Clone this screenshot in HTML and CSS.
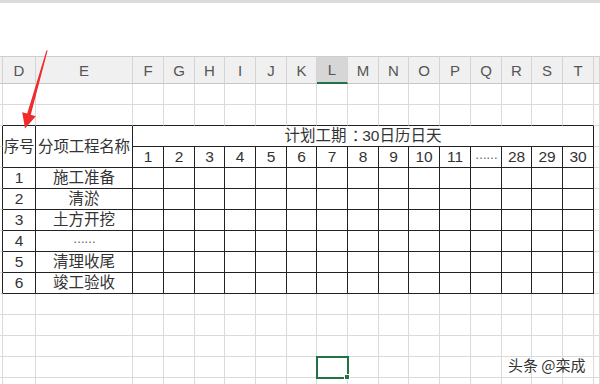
FILE: index.html
```html
<!DOCTYPE html>
<html lang="zh">
  <head>
    <meta charset="UTF-8" />
    <meta name="viewport" content="width=device-width, initial-scale=1.0" />
    <title>施工进度计划表</title>
    <link rel="stylesheet" href="styles.css">
  </head>
  <body>
    <div class="topbar"></div>
    <div class="blank"></div>

    <table class="sheet">
      <colgroup>
        <col class="w3"><col class="w33"><col class="w97">
        <col class="w31"><col class="w31"><col class="w30"><col class="w31"><col class="w31">
        <col class="w30"><col class="w31"><col class="w31"><col class="w30"><col class="w31">
        <col class="w31"><col class="w31"><col class="w30"><col class="w31"><col class="w31">
        <col class="w6">
      </colgroup>
      <thead>
        <tr class="heads">
          <th></th><th>D</th><th>E</th><th>F</th><th>G</th><th>H</th><th>I</th><th>J</th><th>K</th>
          <th class="cur">L</th><th>M</th><th>N</th><th>O</th><th>P</th><th>Q</th><th>R</th><th>S</th><th>T</th><th></th>
        </tr>
      </thead>
      <tbody>
        <tr>
          <td></td><td></td><td></td><td></td><td></td><td></td><td></td><td></td><td></td><td></td>
          <td></td><td></td><td></td><td></td><td></td><td></td><td></td><td></td><td></td>
        </tr>
        <tr>
          <td></td><td class="above"></td><td class="above"></td><td class="above"></td><td class="above"></td>
          <td class="above"></td><td class="above"></td><td class="above"></td><td class="above"></td>
          <td class="above"></td><td class="above"></td><td class="above"></td><td class="above"></td>
          <td class="above"></td><td class="above"></td><td class="above"></td><td class="above"></td>
          <td class="above"></td><td></td>
        </tr>
        <tr>
          <td class="left"></td>
          <td class="b title" rowspan="2">序号</td>
          <td class="b title" rowspan="2">分项工程名称</td>
          <td class="b plan" colspan="15">计划工期<span class="colon">：</span>30日历日天</td>
          <td></td>
        </tr>
        <tr>
          <td class="left"></td>
          <td class="b">1</td><td class="b">2</td><td class="b">3</td><td class="b">4</td><td class="b">5</td>
          <td class="b">6</td><td class="b">7</td><td class="b">8</td><td class="b">9</td><td class="b">10</td>
          <td class="b">11</td><td class="b"><span class="dots">……</span></td><td class="b">28</td><td class="b">29</td><td class="b">30</td>
          <td></td>
        </tr>
        <tr>
          <td class="left"></td><td class="b">1</td><td class="b">施工准备</td>
          <td class="b"></td><td class="b"></td><td class="b"></td><td class="b"></td><td class="b"></td>
          <td class="b"></td><td class="b"></td><td class="b"></td><td class="b"></td><td class="b"></td>
          <td class="b"></td><td class="b"></td><td class="b"></td><td class="b"></td><td class="b"></td>
          <td></td>
        </tr>
        <tr>
          <td class="left"></td><td class="b">2</td><td class="b">清淤</td>
          <td class="b"></td><td class="b"></td><td class="b"></td><td class="b"></td><td class="b"></td>
          <td class="b"></td><td class="b"></td><td class="b"></td><td class="b"></td><td class="b"></td>
          <td class="b"></td><td class="b"></td><td class="b"></td><td class="b"></td><td class="b"></td>
          <td></td>
        </tr>
        <tr>
          <td class="left"></td><td class="b">3</td><td class="b">土方开挖</td>
          <td class="b"></td><td class="b"></td><td class="b"></td><td class="b"></td><td class="b"></td>
          <td class="b"></td><td class="b"></td><td class="b"></td><td class="b"></td><td class="b"></td>
          <td class="b"></td><td class="b"></td><td class="b"></td><td class="b"></td><td class="b"></td>
          <td></td>
        </tr>
        <tr>
          <td class="left"></td><td class="b">4</td><td class="b"><span class="dots">……</span></td>
          <td class="b"></td><td class="b"></td><td class="b"></td><td class="b"></td><td class="b"></td>
          <td class="b"></td><td class="b"></td><td class="b"></td><td class="b"></td><td class="b"></td>
          <td class="b"></td><td class="b"></td><td class="b"></td><td class="b"></td><td class="b"></td>
          <td></td>
        </tr>
        <tr>
          <td class="left"></td><td class="b">5</td><td class="b">清理收尾</td>
          <td class="b"></td><td class="b"></td><td class="b"></td><td class="b"></td><td class="b"></td>
          <td class="b"></td><td class="b"></td><td class="b"></td><td class="b"></td><td class="b"></td>
          <td class="b"></td><td class="b"></td><td class="b"></td><td class="b"></td><td class="b"></td>
          <td></td>
        </tr>
        <tr>
          <td class="left"></td><td class="b">6</td><td class="b">竣工验收</td>
          <td class="b"></td><td class="b"></td><td class="b"></td><td class="b"></td><td class="b"></td>
          <td class="b"></td><td class="b"></td><td class="b"></td><td class="b"></td><td class="b"></td>
          <td class="b"></td><td class="b"></td><td class="b"></td><td class="b"></td><td class="b"></td>
          <td></td>
        </tr>
        <tr>
          <td></td><td></td><td></td><td></td><td></td><td></td><td></td><td></td><td></td><td></td>
          <td></td><td></td><td></td><td></td><td></td><td></td><td></td><td></td><td></td>
        </tr>
        <tr>
          <td></td><td></td><td></td><td></td><td></td><td></td><td></td><td></td><td></td><td></td>
          <td></td><td></td><td></td><td></td><td></td><td></td><td></td><td></td><td></td>
        </tr>
        <tr>
          <td></td><td></td><td></td><td></td><td></td><td></td><td></td><td></td><td></td><td></td>
          <td></td><td></td><td></td><td></td><td></td><td></td><td></td><td></td><td></td>
        </tr>
        <tr>
          <td></td><td></td><td></td><td></td><td></td><td></td><td></td><td></td><td></td><td class="selected"></td>
          <td></td><td></td><td></td><td></td><td></td><td></td><td></td><td></td><td></td>
        </tr>
        <tr>
          <td></td><td></td><td></td><td></td><td></td><td></td><td></td><td></td><td></td><td></td>
          <td></td><td></td><td></td><td></td><td></td><td></td><td></td><td></td><td></td>
        </tr>
      </tbody>
    </table>

    <!-- red pointer drawn on top of the sheet -->
    <svg class="arrow" width="60" height="140" viewBox="0 0 60 140">
      <polygon points="47.6,50.6 46.4,50.4 27.2,113.6 22.2,112.2 25,128.5 35.8,116.2 30.8,114.8" fill="#ef2b2b" />
    </svg>

    <div class="watermark">头条 @栾成</div>
  </body>
</html>
```

FILE: styles.css
```css
body {
  margin: 0;
  width: 600px;
  height: 384px;
  overflow: hidden;
  position: relative;
  background: #fff;
  font-family: "Liberation Sans", "Noto Sans CJK SC", sans-serif;
}
.topbar {
  height: 3px;
  background: #dcdcdc;
}
.blank {
  height: 53px;
}
.sheet {
  table-layout: fixed;
  width: 600px;
  border-collapse: separate;
  border-spacing: 0;
}
.w3 { width: 3px; }
.w6 { width: 6px; }
.w30 { width: 30px; }
.w31 { width: 31px; }
.w33 { width: 33px; }
.w97 { width: 97px; }

.sheet th,
.sheet td {
  box-sizing: border-box;
  padding: 0;
  white-space: nowrap;
  text-align: center;
}
.heads th {
  height: 28px;
  background: #f0f0f0;
  border-top: 1px solid #cdcdcd;
  border-right: 1px solid #d4d4d4;
  border-bottom: 1px solid #c6c6c6;
  font-weight: normal;
  font-size: 15px;
  color: #555;
}
.heads th.cur {
  background: #d6d6d6;
  border-bottom: 2px solid #217346;
}
.sheet tbody tr {
  height: 21px;
}
.sheet td {
  height: 21px;
  border-right: 1px solid #dadada;
  border-bottom: 1px solid #dadada;
  font-size: 15.5px;
  line-height: 18px;
  color: #333;
}
.sheet td.above {
  border-bottom-color: #222;
}
.sheet td.left {
  border-right-color: #222;
}
.sheet td.b {
  border-right-color: #222;
  border-bottom-color: #222;
}
.sheet td.title {
  letter-spacing: -0.2px;
}
.colon {
  padding-left: 5px;
  letter-spacing: -5px;
}
.dots {
  position: relative;
  top: -3px;
  font-size: 12px;
  letter-spacing: -1px;
  color: #555;
}
.sheet td.selected {
  position: relative;
  outline: 2px solid #217346;
  outline-offset: -1px;
}
.sheet td.selected::after {
  content: "";
  position: absolute;
  right: -3px;
  bottom: -3px;
  width: 4px;
  height: 4px;
  background: #217346;
  border: 1px solid #fff;
}
.arrow {
  position: absolute;
  left: 0;
  top: 0;
}
.watermark {
  position: absolute;
  left: 508px;
  top: 354px;
  font-family: "Noto Sans CJK SC", sans-serif;
  font-size: 15px;
  color: #333;
  text-shadow: 0 0 2px #fff, 0 0 2px #fff;
}
```
